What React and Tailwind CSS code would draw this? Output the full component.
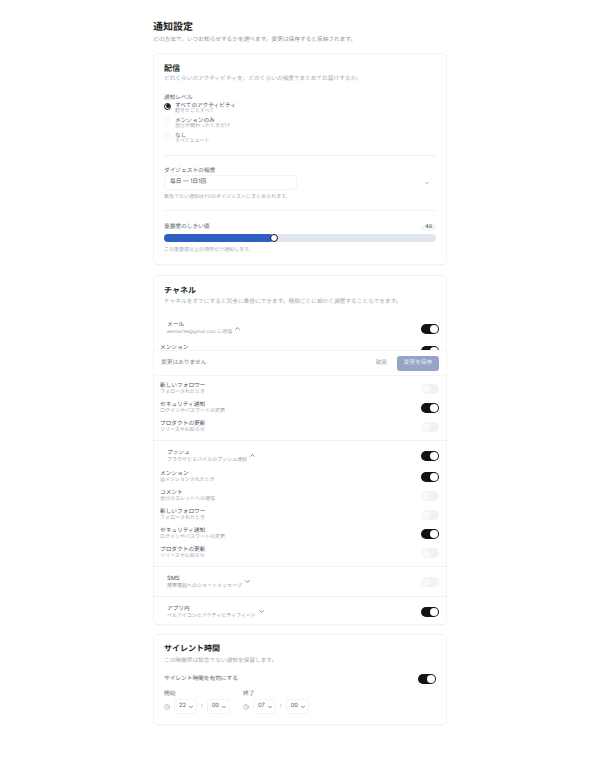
import { ChevronDown, ChevronUp, Clock } from 'lucide-react';

function Toggle({ on }) {
  return (
    <div
      className={`flex h-[10px] w-[18px] shrink-0 items-center rounded-full p-[1px] ${
        on ? 'justify-end bg-[#111318]' : 'justify-start bg-[#f0f2f5]'
      }`}
    >
      <div className={`h-[8px] w-[8px] rounded-full ${on ? 'bg-white' : 'bg-[#f8f9fa]'}`} />
    </div>
  );
}

function Radio({ checked, label, hint }) {
  return (
    <div className="flex h-[15px] items-start gap-[4px]">
      <div
        className={`mt-[0.5px] flex h-[7px] w-[7px] shrink-0 items-center justify-center rounded-full border-[0.75px] ${
          checked ? 'border-[#111318]' : 'border-[#f0f2f5]'
        }`}
      >
        {checked && <div className="h-[4px] w-[4px] rounded-full bg-[#111318]" />}
      </div>
      <div className="flex flex-col">
        <span className="text-[5.7px] leading-[7px] text-[#4b5261]">{label}</span>
        <span className="text-[5px] leading-[5px] text-[#a3a9b4]">{hint}</span>
      </div>
    </div>
  );
}

function SubRow({ label, hint, on }) {
  return (
    <div className="flex h-[19px] items-center justify-between pr-[7px] pl-[6px]">
      <div className="flex flex-col">
        <span className="text-[5.7px] leading-[7px] text-[#4b5261]">{label}</span>
        <span className="text-[5px] leading-[6px] text-[#a3a9b4]">{hint}</span>
      </div>
      <Toggle on={on} />
    </div>
  );
}

function ChannelHead({ label, hint, open, on }) {
  const Icon = open ? ChevronUp : ChevronDown;
  return (
    <div className="flex h-[26px] items-center justify-between pt-[3px] pr-[7px] pl-[13px]">
      <div className="flex items-center gap-[2px]">
        <div className="flex flex-col gap-[1px]">
          <span className="text-[5.7px] leading-[7px] text-[#4b5261]">{label}</span>
          <span className="text-[5px] leading-[6px] text-[#9aa1ad]">{hint}</span>
        </div>
        <Icon size={7} strokeWidth={2} className="text-[#343a46]" />
      </div>
      <Toggle on={on} />
    </div>
  );
}

function TimeSelect({ value }) {
  return (
    <div className="flex h-[15px] w-[23px] items-center justify-between rounded-[3px] border border-[#f3f4f6] pr-[2px] pl-[4px]">
      <span className="text-[5.7px] text-[#4b5261]">{value}</span>
      <ChevronDown size={6} strokeWidth={2.5} className="text-[#343a46]" />
    </div>
  );
}

function TimeField({ label, hour, minute }) {
  return (
    <div className="flex w-[79px] flex-col gap-[2px]">
      <span className="text-[5.7px] leading-[7px] text-[#6b7280]">{label}</span>
      <div className="flex items-center gap-[3px]">
        <Clock size={6} strokeWidth={1.5} className="mr-[1px] text-[#6b7280]" />
        <TimeSelect value={hour} />
        <span className="px-[1px] text-[5.7px] text-[#6b7280]">:</span>
        <TimeSelect value={minute} />
      </div>
    </div>
  );
}

export default function App() {
  return (
    <div className="min-h-[781px] bg-white font-['Inter','Noto_Sans_CJK_JP',sans-serif] antialiased [text-rendering:geometricPrecision]">
      <div className="mx-auto flex w-[294px] flex-col pt-[21px]">
        <h1 className="text-[10px] leading-[13px] font-bold text-[#1c1f26]">通知設定</h1>
        <p className="mt-[2px] text-[5.7px] leading-[8px] text-[#8f96a3]">
          どの方法で、いつお知らせするかを選べます。変更は保存すると反映されます。
        </p>

        <section className="mt-[9px] h-[212px] rounded-[5px] border border-[#f0f2f5] px-[10px] pt-[9px] shadow-[0_1px_1px_rgba(17,24,39,0.03)]">
          <h2 className="text-[8px] leading-[10px] font-bold text-[#1c1f26]">配信</h2>
          <p className="mt-[2px] text-[5.7px] leading-[8px] text-[#a3a9b4]">
            どれくらいのアクティビティを、どのくらいの頻度でまとめてお届けするか。
          </p>
          <p className="mt-[11px] text-[5.7px] leading-[8px] text-[#5b6270]">通知レベル</p>
          <div className="flex flex-col">
            <Radio checked label="すべてのアクティビティ" hint="起きたことすべて" />
            <Radio label="メンションのみ" hint="自分が関わったときだけ" />
            <Radio label="なし" hint="すべてミュート" />
          </div>

          <div className="mt-[8px] border-t border-[#f0f2f5] pt-[11px]">
            <p className="text-[5.7px] leading-[8px] text-[#5b6270]">ダイジェストの頻度</p>
            <div className="flex items-center justify-between pr-[6px]">
              <div className="flex h-[15px] w-[133px] items-center rounded-[3px] border border-[#f3f4f6] pl-[5px] text-[5.7px] text-[#4b5261]">
                毎日 — 1日1回
              </div>
              <ChevronDown size={6} strokeWidth={2} className="text-[#6b7280]" />
            </div>
            <p className="mt-[4px] text-[5px] leading-[7px] text-[#a3a9b4]">
              緊急でない通知は1つのダイジェストにまとめられます。
            </p>
          </div>

          <div className="mt-[9px] border-t border-[#f0f2f5] pt-[12px]">
            <div className="flex items-center justify-between">
              <span className="text-[5.7px] leading-[8px] text-[#5b6270]">重要度のしきい値</span>
              <span className="rounded-full bg-[#f5f6f8] px-[4px] text-[5px] leading-[7px] font-semibold text-[#5b6270]">
                40
              </span>
            </div>
            <div className="relative mt-[3px] h-[8px] rounded-full bg-[#e1e6ee]">
              <div className="h-full w-[40%] rounded-full bg-[#2f5fc4]" />
              <div className="absolute top-0 left-[106px] h-[8px] w-[8px] rounded-full border-[1.5px] border-[#111318] bg-white" />
            </div>
            <p className="mt-[5px] text-[5px] leading-[7px] text-[#a3a9b4]">
              この重要度以上の項目だけ通知します。
            </p>
          </div>
        </section>

        <section className="relative mt-[10px] h-[350px] rounded-[5px] border border-[#f0f2f5] pt-[9px] shadow-[0_1px_1px_rgba(17,24,39,0.03)]">
          <div className="px-[10px]">
            <h2 className="text-[8px] leading-[10px] font-bold text-[#1c1f26]">チャネル</h2>
            <p className="mt-[3px] text-[5.7px] leading-[8px] text-[#a3a9b4]">
              チャネルをオフにすると完全に華音にできます。種類ごとに細かく調整することもできます。
            </p>
          </div>
          <div className="mt-[8px] flex flex-col pb-[4px]">
            <ChannelHead
              label="メール"
              hint={
                <>
                  <span className="text-[4.6px]">eemks7ke@gmail.com</span> に送信
                </>
              }
              open
              on
            />
            <div className="mt-[1px]">
              <SubRow label="メンション" hint="@メンションされたとき" on />
              <SubRow label="コメント" hint="自分のスレッドへの返信" />
              <SubRow label="新しいフォロワー" hint="フォローされたとき" />
              <SubRow label="セキュリティ通知" hint="ログインやパスワードの変更" on />
              <SubRow label="プロダクトの更新" hint="リリースやお知らせ" />
            </div>
          </div>
          <div className="border-t border-[#f0f2f5] pb-[4px]">
            <ChannelHead label="プッシュ" hint="ブラウザとモバイルのプッシュ通知" open on />
            <SubRow label="メンション" hint="@メンションされたとき" on />
            <SubRow label="コメント" hint="自分のスレッドへの返信" />
            <SubRow label="新しいフォロワー" hint="フォローされたとき" />
            <SubRow label="セキュリティ通知" hint="ログインやパスワードの変更" on />
            <SubRow label="プロダクトの更新" hint="リリースやお知らせ" />
          </div>
          <div className="border-t border-[#f0f2f5] pb-[3px]">
            <ChannelHead label="SMS" hint="携帯電話へのショートメッセージ" />
          </div>
          <div className="border-t border-[#f0f2f5]">
            <ChannelHead label="アプリ内" hint="ベルアイコンとアクティビティフィード" on />
          </div>

          {/* sticky save bar sitting on top of the channel list */}
          <div className="absolute top-[74px] -right-px -left-px flex h-[26px] items-center justify-between rounded-[4px] border border-[#f3f4f6] bg-white pr-[7px] pl-[7px]">
            <span className="text-[5.7px] text-[#7b8290]">変更はありません</span>
            <div className="flex items-center gap-[10px]">
              <span className="text-[5.7px] text-[#a3a9b4]">破棄</span>
              <div className="flex h-[15px] w-[42px] items-center justify-center rounded-[3px] bg-[#95a4c7] text-[5.7px] text-[#e6eaf3]">
                変更を保存
              </div>
            </div>
          </div>
        </section>

        <section className="mt-[9px] h-[91px] rounded-[5px] border border-[#f0f2f5] px-[10px] pt-[8px] shadow-[0_1px_1px_rgba(17,24,39,0.03)]">
          <h2 className="text-[8px] leading-[10px] font-bold text-[#1c1f26]">サイレント時間</h2>
          <p className="mt-[4px] text-[5.7px] leading-[8px] text-[#a3a9b4]">
            この時間帯は緊急でない通知を保留します。
          </p>
          <div className="mt-[9px] flex items-center justify-between">
            <span className="text-[5.7px] text-[#5b6270]">サイレント時間を有効にする</span>
            <Toggle on />
          </div>
          <div className="mt-[6px] flex">
            <TimeField label="開始" hour="22" minute="00" />
            <TimeField label="終了" hour="07" minute="00" />
          </div>
        </section>
      </div>
    </div>
  );
}
